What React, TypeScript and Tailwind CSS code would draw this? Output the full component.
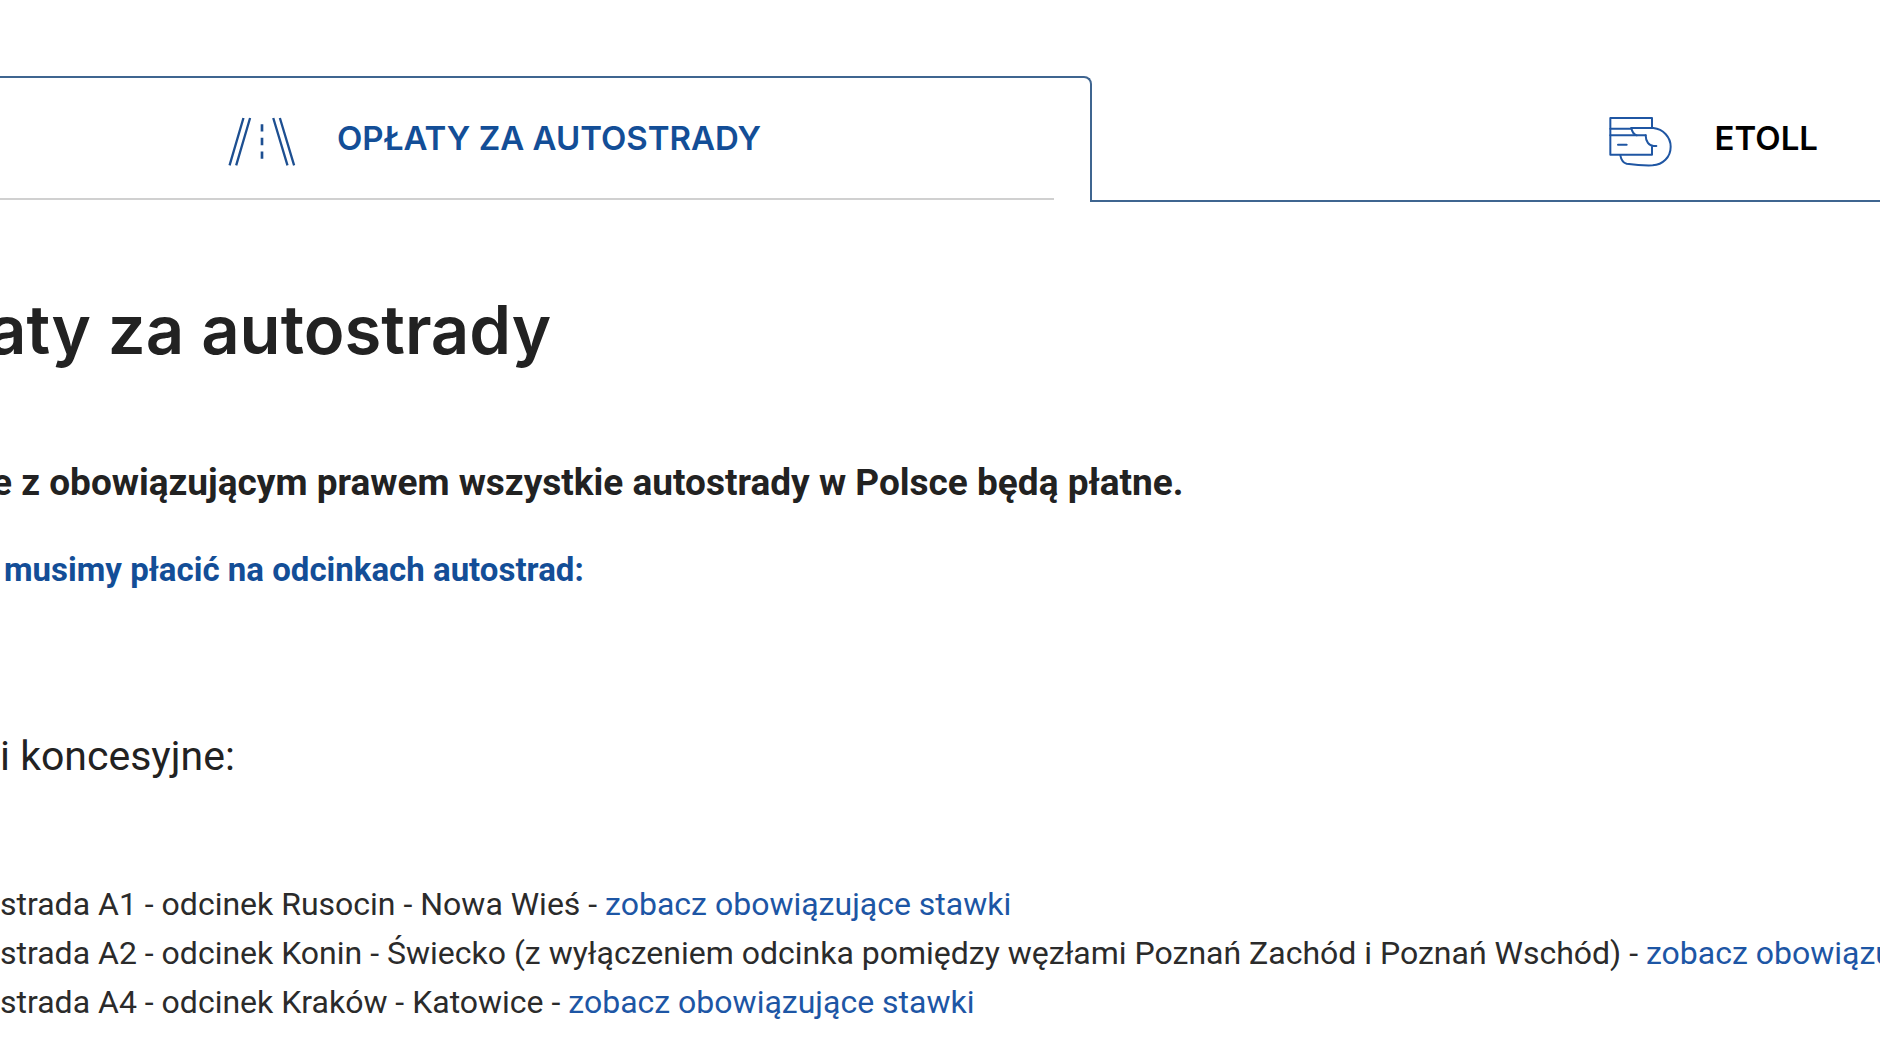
import type { ReactNode } from "react";

const sections = [
  { road: "strada A1 - odcinek Rusocin - Nowa Wieś - ", link: "zobacz obowiązujące stawki" },
  {
    road: "strada A2 - odcinek Konin - Świecko (z wyłączeniem odcinka pomiędzy węzłami Poznań Zachód i Poznań Wschód) - ",
    link: "zobacz obowiązujące stawki",
  },
  { road: "strada A4 - odcinek Kraków - Katowice - ", link: "zobacz obowiązujące stawki" },
];

function RoadIcon() {
  return (
    <svg aria-hidden="true" viewBox="40 36 204 148" className="mt-1.5 h-[49px] w-[68px] shrink-0" fill="none" stroke="#1d4f91" strokeWidth="7">
      <path d="M86 39 44 182M106 39 64 182M176 39l43 143M196 39l43 143" />
      <path d="M142 58v22M142 99v22M142 140v22" strokeWidth="8" />
    </svg>
  );
}

function CardIcon() {
  return (
    <svg
      aria-hidden="true"
      viewBox="55 35 189 150"
      className="mt-2 h-[50px] w-[63px] shrink-0"
      fill="none"
      stroke="#1f56a3"
      strokeWidth="6"
      strokeLinecap="round"
      strokeLinejoin="round"
    >
      <path d="M184 66V38H59v110h125v-23" />
      <path d="M59 70h63M59 90h106M82 118h26" />
      <path d="M122 68h66c30 3 52 28 52 56 0 32-24 54-54 56-26 1-50-1-78-5-12-3-17-14-19-25" />
      <path d="M122 68c2 11 7 19 16 22M165 90c0 18 10 32 24 32h8" />
    </svg>
  );
}

function Tab({ active, children }: { active?: boolean; children: ReactNode }) {
  return (
    <button
      type="button"
      role="tab"
      aria-selected={!!active}
      className={
        active
          ? "w-[58.1%] rounded-tr-lg border-t-2 border-r-2 border-[#3f6590] pr-9 text-[#134e97]"
          : "flex flex-1 items-center justify-end gap-[43px] border-b-2 border-[#3f6590] pr-[62px] text-black"
      }
    >
      {children}
    </button>
  );
}

export default function App() {
  return (
    <main className="min-h-screen overflow-hidden bg-white pt-[76px] font-['Roboto',sans-serif] text-[#222]">
      <div role="tablist" className="flex h-[126px] font-['Inter',sans-serif] text-[33px] leading-[48px] font-semibold">
        <Tab active>
          <span className="flex h-full flex-col">
            <span className="flex h-[122px] items-center gap-[41px] border-b-2 border-[#d0d0d0] pl-[228px]">
              <RoadIcon />
              OPŁATY ZA AUTOSTRADY
            </span>
          </span>
        </Tab>
        <Tab>
          <CardIcon />
          ETOLL
        </Tab>
      </div>

      <article className="pt-[88px]">
        <h1 className="-ml-3 font-['Inter',sans-serif] text-[67px] leading-[80px] font-semibold">aty za autostrady</h1>
        <p className="-ml-2 mt-[89px] text-[37px] leading-[48px] font-bold">
          e z obowiązującym prawem wszystkie autostrady w Polsce będą płatne.
        </p>
        <p className="mt-[39px] pl-1 text-[33px] leading-[48px] font-bold text-[#134e97]">musimy płacić na odcinkach autostrad:</p>
        <h2 className="mt-[138px] text-[41px] leading-[48px]">i koncesyjne:</h2>
        <ul className="mt-[100px] text-[32px] leading-[49px] whitespace-nowrap text-[#2b2b2b]">
          {sections.map(({ road, link }) => (
            <li key={road}>
              {road}
              <a href="#stawki" className="text-[#1d56a5]">
                {link}
              </a>
            </li>
          ))}
        </ul>
      </article>
    </main>
  );
}
